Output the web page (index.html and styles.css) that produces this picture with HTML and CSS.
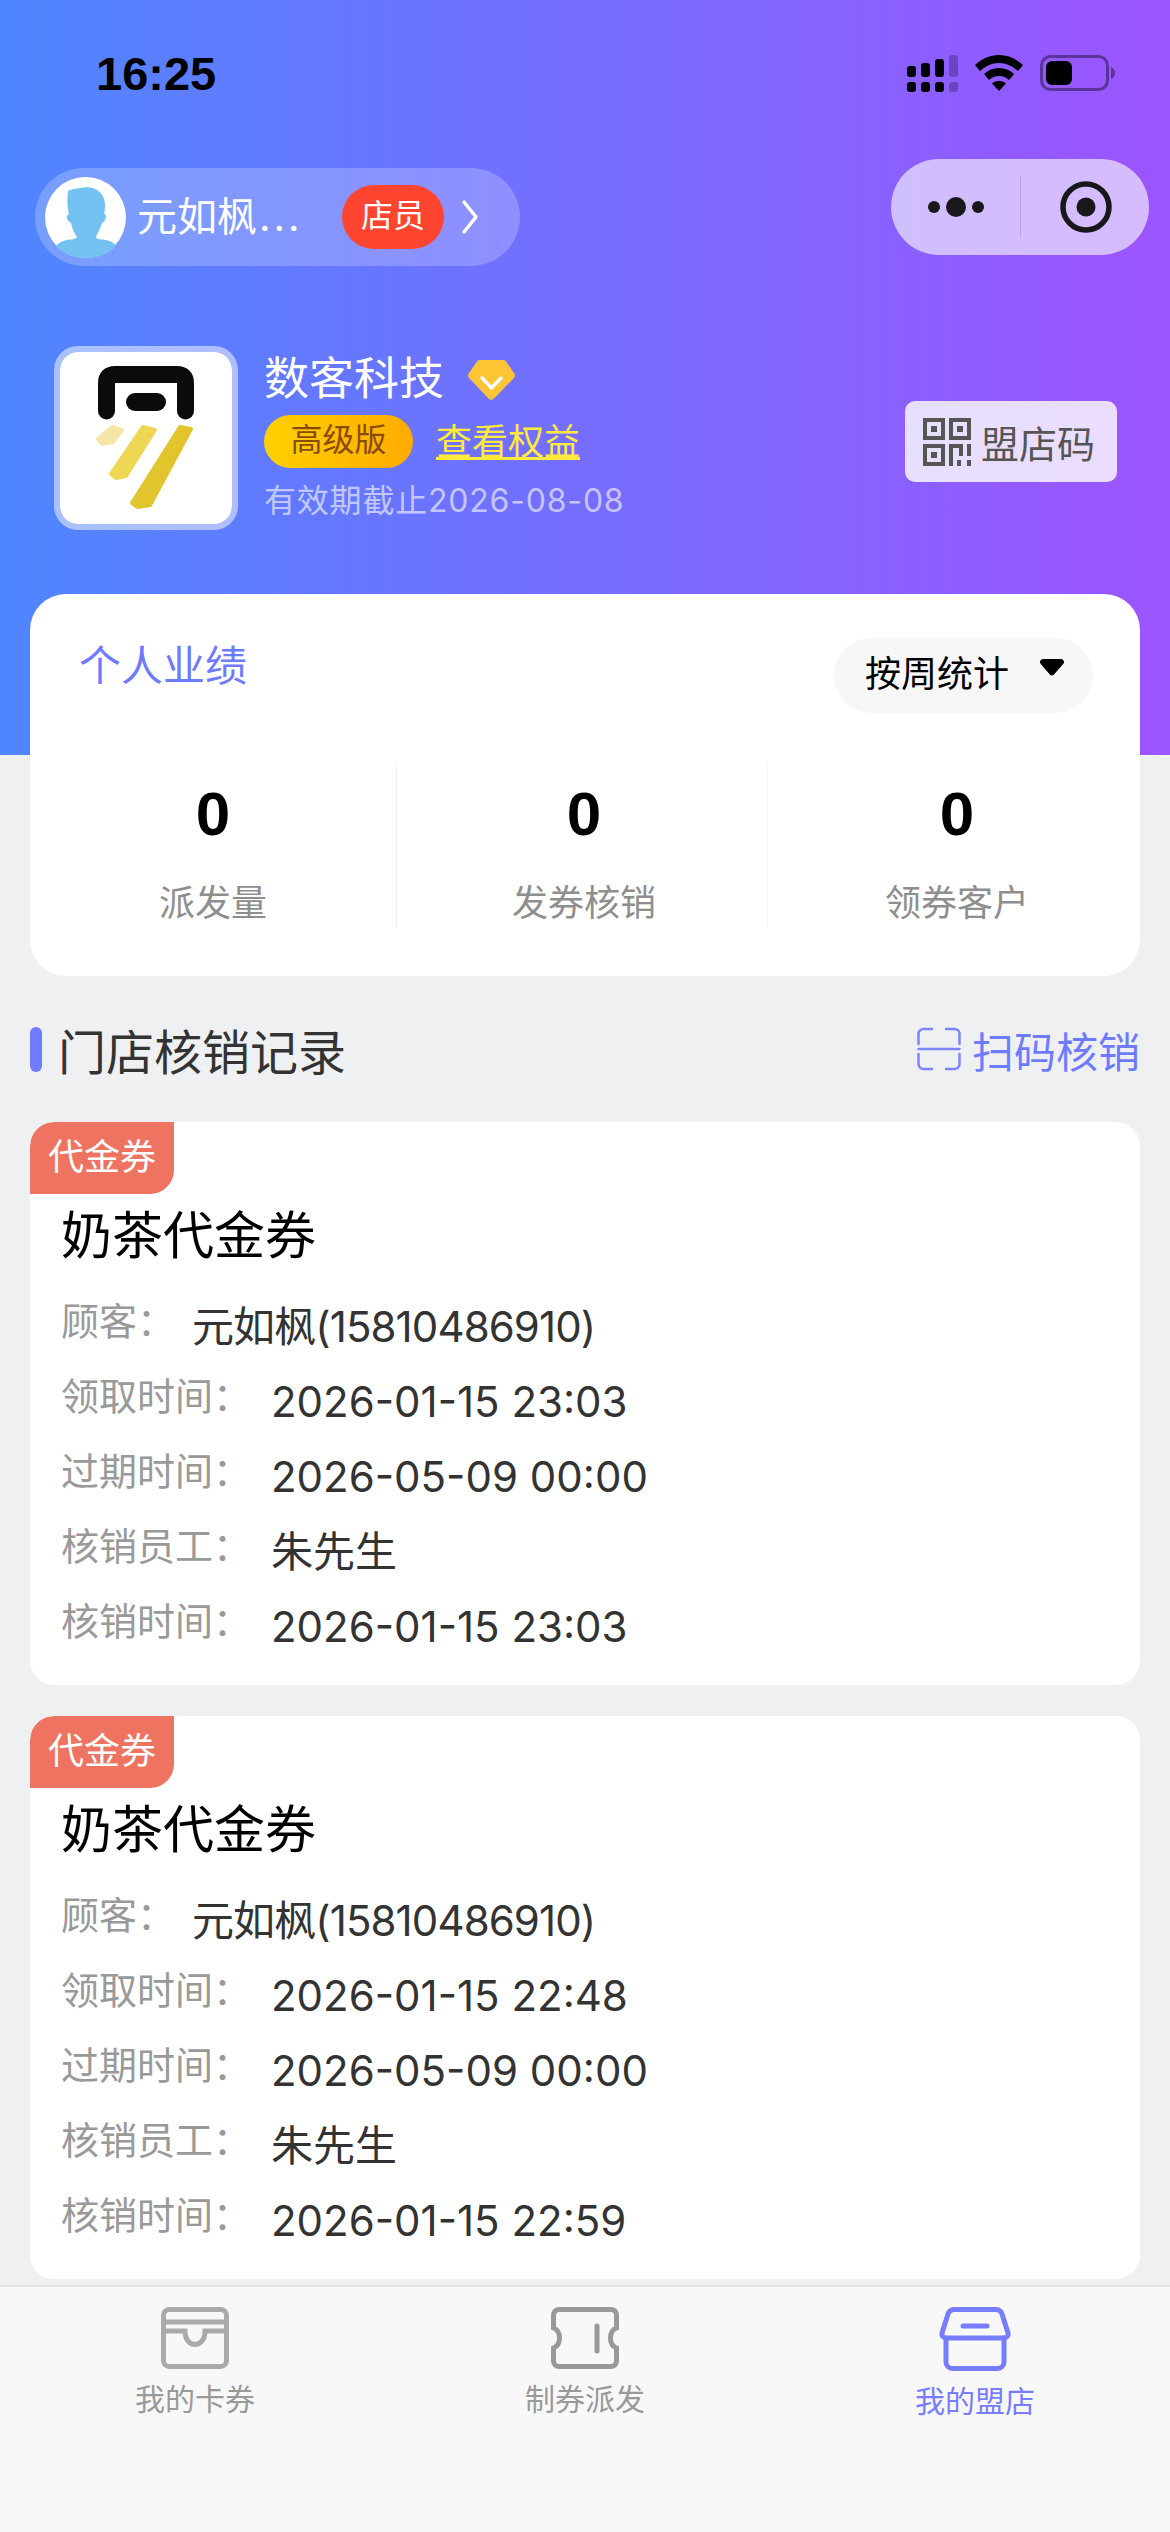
FILE: index.html
```html
<!DOCTYPE html>
<html lang="zh-CN">
<head>
    <meta charset="UTF-8">
    <meta name="viewport" content="width=device-width, initial-scale=1.0">
    <title>我的盟店</title>
    <link rel="stylesheet" href="styles.css">
</head>
<body>
    <div class="page">
        <div class="hero">
            <div class="status-bar">
                <span class="time">16:25</span>
                <div class="status-icons">
                    <svg class="signal" width="51" height="37" viewBox="0 0 51 37">
                        <rect x="0" y="11" width="9" height="11" rx="3"/>
                        <rect x="14" y="8" width="9" height="14" rx="3"/>
                        <rect x="28" y="4" width="9" height="18" rx="3"/>
                        <rect x="42" y="0" width="9" height="22" rx="3" opacity="0.25"/>
                        <rect x="0" y="27" width="9" height="10" rx="3"/>
                        <rect x="14" y="27" width="9" height="10" rx="3"/>
                        <rect x="28" y="27" width="9" height="10" rx="3"/>
                        <rect x="42" y="27" width="9" height="10" rx="3" opacity="0.25"/>
                    </svg>
                    <svg class="wifi" width="48" height="36" viewBox="0 0 48 36">
                        <path d="M24 0C15 0 7 3.500 0 10l5 6c5.500-5 12-8 19-8s13.500 3 19 8l5-6C41 3.500 33 0 24 0z"/>
                        <path d="M24 13c-6 0-11 2-15 6l5 6c3-2.500 6-4 10-4s7 1.500 10 4l5-6c-4-4-9-6-15-6z"/>
                        <path d="M24 26c-3 0-5 .8-7 2.500L24 36l7-7.500c-2-1.700-4-2.500-7-2.500z"/>
                    </svg>
                    <svg class="battery" width="75" height="36" viewBox="0 0 75 36">
                        <rect x="1.500" y="1.500" width="66" height="33" rx="9" fill="none" stroke="#000" stroke-width="3" opacity="0.4"/>
                        <rect x="6" y="6" width="26" height="24" rx="6"/>
                        <path d="M71 12c2.500 1 4 3 4 6s-1.500 5-4 6z" opacity="0.4"/>
                    </svg>
                </div>
            </div>

            <div class="nav-row">
                <div class="member-pill">
                    <svg class="avatar" width="81" height="81" viewBox="0 0 81 81">
                        <circle cx="40.500" cy="40.500" r="40.500" fill="#fff"/>
                        <path d="M23 14c6-3 9-2 12-3 12-3 24 2 25 16 0 4 0 7-1 10 3 0 3 6-2 9-2 7-5 11-6 14 1 3 5 2 10 3 5 1 8 3 10 6-7 8-18 12-30 12s-23-4-30-12c2-3 6-5 11-6 4-1 8 0 10-3-2-3-5-8-6-14-4-2-6-7-2-9-2-7-2-16-1-23z" fill="#74c2f2"/>
                    </svg>
                    <span class="member-name">元如枫<span class="name-dots">...</span></span>
                    <span class="role-badge">店员</span>
                    <svg class="chevron" width="18" height="36" viewBox="0 0 18 36">
                        <path d="M3 3l12 15L3 33" fill="none" stroke="#fff" stroke-width="3.500" stroke-linecap="round" stroke-linejoin="round"/>
                    </svg>
                </div>
                <div class="capsule">
                    <svg class="capsule-more" width="62" height="20" viewBox="0 0 62 20">
                        <circle cx="6" cy="10" r="6"/>
                        <circle cx="28" cy="10" r="10"/>
                        <circle cx="50" cy="10" r="6"/>
                    </svg>
                    <span class="capsule-line"></span>
                    <svg class="capsule-target" width="52" height="52" viewBox="0 0 52 52">
                        <circle cx="26" cy="26" r="23" fill="none" stroke="#18181b" stroke-width="5.500"/>
                        <circle cx="26" cy="26" r="9.500"/>
                    </svg>
                </div>
            </div>

            <div class="store-row">
                <div class="store-logo">
                    <svg width="172" height="172" viewBox="0 0 172 172">
                        <path d="M46.500 59V31q0-8.500 8.500-8.500h62q8.500 0 8.500 8.500v28" fill="none" stroke="#0b0b0b" stroke-width="17" stroke-linecap="round"/>
                        <rect x="66" y="41" width="40" height="18" rx="9" fill="#0b0b0b"/>
                        <path d="M120 75L131 77L90 153L78 155L72 151Z" fill="#e2c42d" stroke="#e2c42d" stroke-width="4" stroke-linejoin="round"/>
                        <path d="M83 75L95 78L66 124L56 126L51 122Z" fill="#efd756" stroke="#efd756" stroke-width="4" stroke-linejoin="round"/>
                        <path d="M52 75L62 78L53 90L42 92L38 87Z" fill="#f3e6a6" stroke="#f3e6a6" stroke-width="4" stroke-linejoin="round"/>
                    </svg>
                </div>
                <div class="store-info">
                    <div class="store-title">
                        <span class="store-name">数客科技</span>
                        <svg class="diamond" width="47" height="40" viewBox="0 0 47 40">
                            <path d="M12 0h23a4 4 0 0 1 3.500 2l7.500 11a4 4 0 0 1 0 5L26 38.500a4 4 0 0 1-5.500 0L1 18a4 4 0 0 1 0-5L8.500 2A4 4 0 0 1 12 0z" fill="#ffc535"/>
                            <path d="M14 18l9.500 10L33 18" fill="none" stroke="#fff" stroke-width="3.500" stroke-linecap="round" stroke-linejoin="round"/>
                        </svg>
                    </div>
                    <div class="store-plan">
                        <span class="plan-badge">高级版</span>
                        <span class="plan-link">查看权益</span>
                    </div>
                    <div class="store-expire">有效期截止2026-08-08</div>
                </div>
                <div class="qr-button">
                    <svg width="48" height="48" viewBox="0 0 48 48" fill="#555">
                        <path d="M0 0h22v22H0zM4 4v14h14V4zM8 8h6v6H8z" fill-rule="evenodd"/>
                        <path d="M26 0h22v22H26zM30 4v14h14V4zM34 8h6v6h-6z" fill-rule="evenodd"/>
                        <path d="M0 26h22v22H0zM4 30v14h14V30zM8 34h6v6H8z" fill-rule="evenodd"/>
                        <path d="M26 26h4v22h-4zM30 26h10v4H30zM36 30h4v8h-4zM44 26h4v12h-4zM34 42h4v6h-4zM44 42h4v6h-4z"/>
                    </svg>
                    <span>盟店码</span>
                </div>
            </div>
        </div>

        <div class="content">
            <div class="stats-card">
                <div class="stats-head">
                    <span class="stats-title">个人业绩</span>
                    <div class="stats-select">
                        <span>按周统计</span>
                        <svg width="24" height="17" viewBox="0 0 24 17">
                            <path d="M3 0h18a3 3 0 0 1 2.200 5L14 15.500a3 3 0 0 1-4.200 0L.8 5A3 3 0 0 1 3 0z"/>
                        </svg>
                    </div>
                </div>
                <div class="stats-grid">
                    <div class="stat">
                        <div class="stat-num">0</div>
                        <div class="stat-label">派发量</div>
                    </div>
                    <div class="stat">
                        <div class="stat-num">0</div>
                        <div class="stat-label">发券核销</div>
                    </div>
                    <div class="stat">
                        <div class="stat-num">0</div>
                        <div class="stat-label">领券客户</div>
                    </div>
                </div>
            </div>

            <div class="section-head">
                <div class="section-title">
                    <span class="section-bar"></span>
                    <span>门店核销记录</span>
                </div>
                <div class="scan-link">
                    <svg width="44" height="44" viewBox="0 0 44 44" fill="none" stroke="#7c85ff" stroke-width="2.500" stroke-linecap="round">
                        <path d="M1.500 17V7a5 5 0 0 1 5-5H15M29 2h8.500a5 5 0 0 1 5 5v10M1.500 27v10a5 5 0 0 0 5 5H15M29 42h8.500a5 5 0 0 0 5-5V27M1.500 22h41"/>
                    </svg>
                    <span>扫码核销</span>
                </div>
            </div>

            <div class="coupon">
                <span class="coupon-tag">代金券</span>
                <div class="coupon-title">奶茶代金券</div>
                <div class="coupon-row row-short"><span class="row-label">顾客：</span><span class="row-value">元如枫(15810486910)</span></div>
                <div class="coupon-row"><span class="row-label">领取时间：</span><span class="row-value">2026-01-15 23:03</span></div>
                <div class="coupon-row"><span class="row-label">过期时间：</span><span class="row-value">2026-05-09 00:00</span></div>
                <div class="coupon-row"><span class="row-label">核销员工：</span><span class="row-value">朱先生</span></div>
                <div class="coupon-row"><span class="row-label">核销时间：</span><span class="row-value">2026-01-15 23:03</span></div>
            </div>

            <div class="coupon">
                <span class="coupon-tag">代金券</span>
                <div class="coupon-title">奶茶代金券</div>
                <div class="coupon-row row-short"><span class="row-label">顾客：</span><span class="row-value">元如枫(15810486910)</span></div>
                <div class="coupon-row"><span class="row-label">领取时间：</span><span class="row-value">2026-01-15 22:48</span></div>
                <div class="coupon-row"><span class="row-label">过期时间：</span><span class="row-value">2026-05-09 00:00</span></div>
                <div class="coupon-row"><span class="row-label">核销员工：</span><span class="row-value">朱先生</span></div>
                <div class="coupon-row"><span class="row-label">核销时间：</span><span class="row-value">2026-01-15 22:59</span></div>
            </div>
        </div>

        <div class="tabbar">
            <div class="tab">
                <svg width="68" height="62" viewBox="0 0 68 62" fill="none" stroke="#aaa" stroke-width="5">
                    <rect x="2.500" y="2.500" width="63" height="57" rx="6"/>
                    <path d="M3 15h62"/>
                    <path d="M3 24h21c0 18 20 18 20 0h21"/>
                </svg>
                <span>我的卡券</span>
            </div>
            <div class="tab">
                <svg width="68" height="62" viewBox="0 0 68 62" fill="none" stroke="#999" stroke-width="5" stroke-linecap="round">
                    <path d="M8 2.500h52a5.500 5.500 0 0 1 5.500 5.500v13c-8 3-8 17 0 20v13a5.500 5.500 0 0 1-5.500 5.500H8A5.500 5.500 0 0 1 2.500 54V41c8-3 8-17 0-20V8A5.500 5.500 0 0 1 8 2.500z"/>
                    <path d="M46 19v25"/>
                </svg>
                <span>制券派发</span>
            </div>
            <div class="tab tab-active">
                <svg width="72" height="64" viewBox="0 0 72 64" fill="none" stroke="#777dff" stroke-width="5" stroke-linecap="round" stroke-linejoin="round">
                    <path d="M15 2.500h42a6 6 0 0 1 6 4.500l6 19a4 4 0 0 1-4 5H7a4 4 0 0 1-4-5l6-19a6 6 0 0 1 6-4.500z"/>
                    <path d="M7 31v24a6.500 6.500 0 0 0 6.500 6.500h45A6.500 6.500 0 0 0 65 55V31"/>
                    <path d="M24 19h24"/>
                </svg>
                <span>我的盟店</span>
            </div>
        </div>
    </div>
</body>
</html>
```

FILE: styles.css
```css
* {
    box-sizing: border-box;
}

body {
    margin: 0;
    font-family: 'Inter', 'Noto Sans CJK SC', sans-serif;
    color: #333;
}

.page {
    width: 1170px;
    height: 2532px;
    display: flex;
    flex-direction: column;
    overflow: hidden;
    background: #eff0f2;
}

.hero {
    height: 755px;
    flex-shrink: 0;
    background: linear-gradient(to right, #4f86ff, #9c54ff);
}

.status-bar {
    height: 159px;
    padding: 55px 55px 0 96px;
    display: flex;
    justify-content: space-between;
    align-items: flex-start;
}

.time {
    font-family: 'Liberation Sans', sans-serif;
    font-size: 47px;
    font-weight: 700;
    line-height: 38px;
    color: #000;
}

.status-icons {
    display: flex;
    gap: 17px;
}

.nav-row {
    height: 187px;
    padding: 0 21px 0 35px;
    display: flex;
    justify-content: space-between;
    align-items: flex-start;
}

.member-pill {
    width: 485px;
    height: 98px;
    margin-top: 9px;
    padding-left: 10px;
    display: flex;
    align-items: center;
    background: rgba(255, 255, 255, 0.22);
    border-radius: 49px;
}

.member-name {
    width: 205px;
    margin-left: 11px;
    font-size: 40px;
    line-height: 58px;
    color: #fff;
}

.name-dots {
    margin-left: 2px;
    letter-spacing: 3px;
}

.role-badge {
    width: 102px;
    height: 64px;
    line-height: 62px;
    text-align: center;
    font-size: 32px;
    color: #fff;
    background: #ff4530;
    border-radius: 32px;
}

.chevron {
    margin-left: 17px;
}

.capsule {
    width: 258px;
    height: 96px;
    display: flex;
    align-items: center;
    background: rgba(255, 255, 255, 0.6);
    border-radius: 48px;
}

.capsule svg {
    fill: #18181b;
}

.capsule-more {
    margin-left: 37px;
}

.capsule-line {
    width: 1px;
    height: 60px;
    margin-left: 30px;
    background: rgba(0, 0, 0, 0.12);
}

.capsule-target {
    margin-left: 39px;
}

.store-row {
    display: flex;
    padding: 0 53px 0 54px;
    align-items: flex-start;
}

.store-logo {
    width: 184px;
    height: 184px;
    flex-shrink: 0;
    display: flex;
    background: #fff;
    border: 6px solid rgba(255, 255, 255, 0.5);
    background-clip: padding-box;
    border-radius: 24px;
}

.store-info {
    width: 667px;
    padding: 3px 0 0 26px;
}

.store-title {
    height: 60px;
    display: flex;
    align-items: center;
}

.store-name {
    font-size: 45px;
    line-height: 60px;
    color: #fff;
}

.diamond {
    margin: 2px 0 0 24px;
}

.store-plan {
    display: flex;
    align-items: center;
    margin-top: 6px;
}

.plan-badge {
    width: 149px;
    height: 53px;
    line-height: 50px;
    text-align: center;
    font-size: 32px;
    color: #8a4b08;
    background: linear-gradient(to right, #ffd000, #ffab00);
    border-radius: 27px;
}

.plan-link {
    margin-left: 23px;
    font-size: 36px;
    line-height: 50px;
    color: #ffe93b;
    text-decoration: underline;
    text-decoration-thickness: 3px;
}

.store-expire {
    margin-top: 11px;
    font-size: 32px;
    line-height: 44px;
    letter-spacing: 0.8px;
    color: rgba(255, 255, 255, 0.6);
}

.qr-button {
    width: 212px;
    height: 81px;
    margin-top: 55px;
    padding-left: 18px;
    display: flex;
    align-items: center;
    gap: 10px;
    font-size: 38px;
    color: #555;
    background: rgba(255, 255, 255, 0.8);
    border-radius: 10px;
    flex-shrink: 0;
}

.content {
    flex: 1;
    padding: 0 30px;
    margin-top: -161px;
}

.stats-card {
    height: 382px;
    background: #fff;
    border-radius: 36px;
    padding-top: 44px;
}

.stats-head {
    height: 75px;
    display: flex;
    justify-content: space-between;
    padding: 0 47px 0 49px;
}

.stats-title {
    font-size: 42px;
    line-height: 56px;
    color: #6f7bff;
}

.stats-select {
    width: 259px;
    height: 75px;
    padding: 0 0 9px 31px;
    display: flex;
    align-items: center;
    background: #f7f7f7;
    border-radius: 38px;
    font-size: 36px;
    color: #000;
}

.stats-select svg {
    margin: 0 0 8px 31px;
}

.stats-grid {
    display: grid;
    grid-template-columns: 367px 371px 372px;
    margin-top: 49px;
}

.stat {
    height: 166px;
    text-align: center;
    border-right: 1px solid #f3f3f3;
}

.stat:nth-child(2) {
    padding-left: 4px;
}

.stat:last-child {
    border-right: none;
    padding-left: 6px;
}

.stat-num {
    font-family: 'Liberation Sans', sans-serif;
    font-size: 62px;
    font-weight: 700;
    line-height: 60px;
    margin-top: 22px;
    color: #000;
}

.stat-label {
    margin-top: 35px;
    font-size: 36px;
    line-height: 48px;
    color: #8e8e8e;
}

.section-head {
    height: 146px;
    display: flex;
    justify-content: space-between;
    align-items: center;
}

.section-title {
    display: flex;
    align-items: center;
    font-size: 48px;
    color: #333;
}

.section-bar {
    width: 12px;
    height: 45px;
    margin-right: 16px;
    background: #6f7bff;
    border-radius: 6px;
}

.scan-link {
    display: flex;
    align-items: center;
    gap: 11px;
    font-size: 42px;
    color: #6f7bff;
}

.coupon {
    height: 563px;
    background: #fff;
    border-radius: 24px;
    overflow: hidden;
}

.coupon + .coupon {
    margin-top: 31px;
}

.coupon-tag {
    display: block;
    width: 144px;
    height: 72px;
    line-height: 70px;
    text-align: center;
    font-size: 36px;
    color: #fff;
    background: #ee7361;
    border-radius: 24px 0 24px 0;
}

.coupon-title {
    margin: 12px 0 21px 31px;
    font-size: 51px;
    line-height: 60px;
    color: #000;
}

.coupon-row {
    height: 75px;
    padding-left: 31px;
    display: flex;
    align-items: flex-start;
}

.row-label {
    width: 210px;
    padding-top: 8px;
    font-size: 38px;
    line-height: 52px;
    color: #999;
}

.row-short .row-label {
    width: 131px;
}

.row-value {
    padding-top: 12px;
    font-size: 42px;
    line-height: 56px;
    color: #333;
}

.row-short .row-value {
    letter-spacing: -0.9px;
}

.tabbar {
    height: 247px;
    flex-shrink: 0;
    display: grid;
    grid-template-columns: repeat(3, 1fr);
    padding-top: 20px;
    background: #f8f8f8;
    border-top: 2px solid #e4e4e6;
}

.tab {
    display: flex;
    flex-direction: column;
    align-items: center;
    font-size: 30px;
    color: #999;
}

.tab span {
    margin-top: 8px;
    line-height: 44px;
}

.tab-active {
    color: #777dff;
}
```
